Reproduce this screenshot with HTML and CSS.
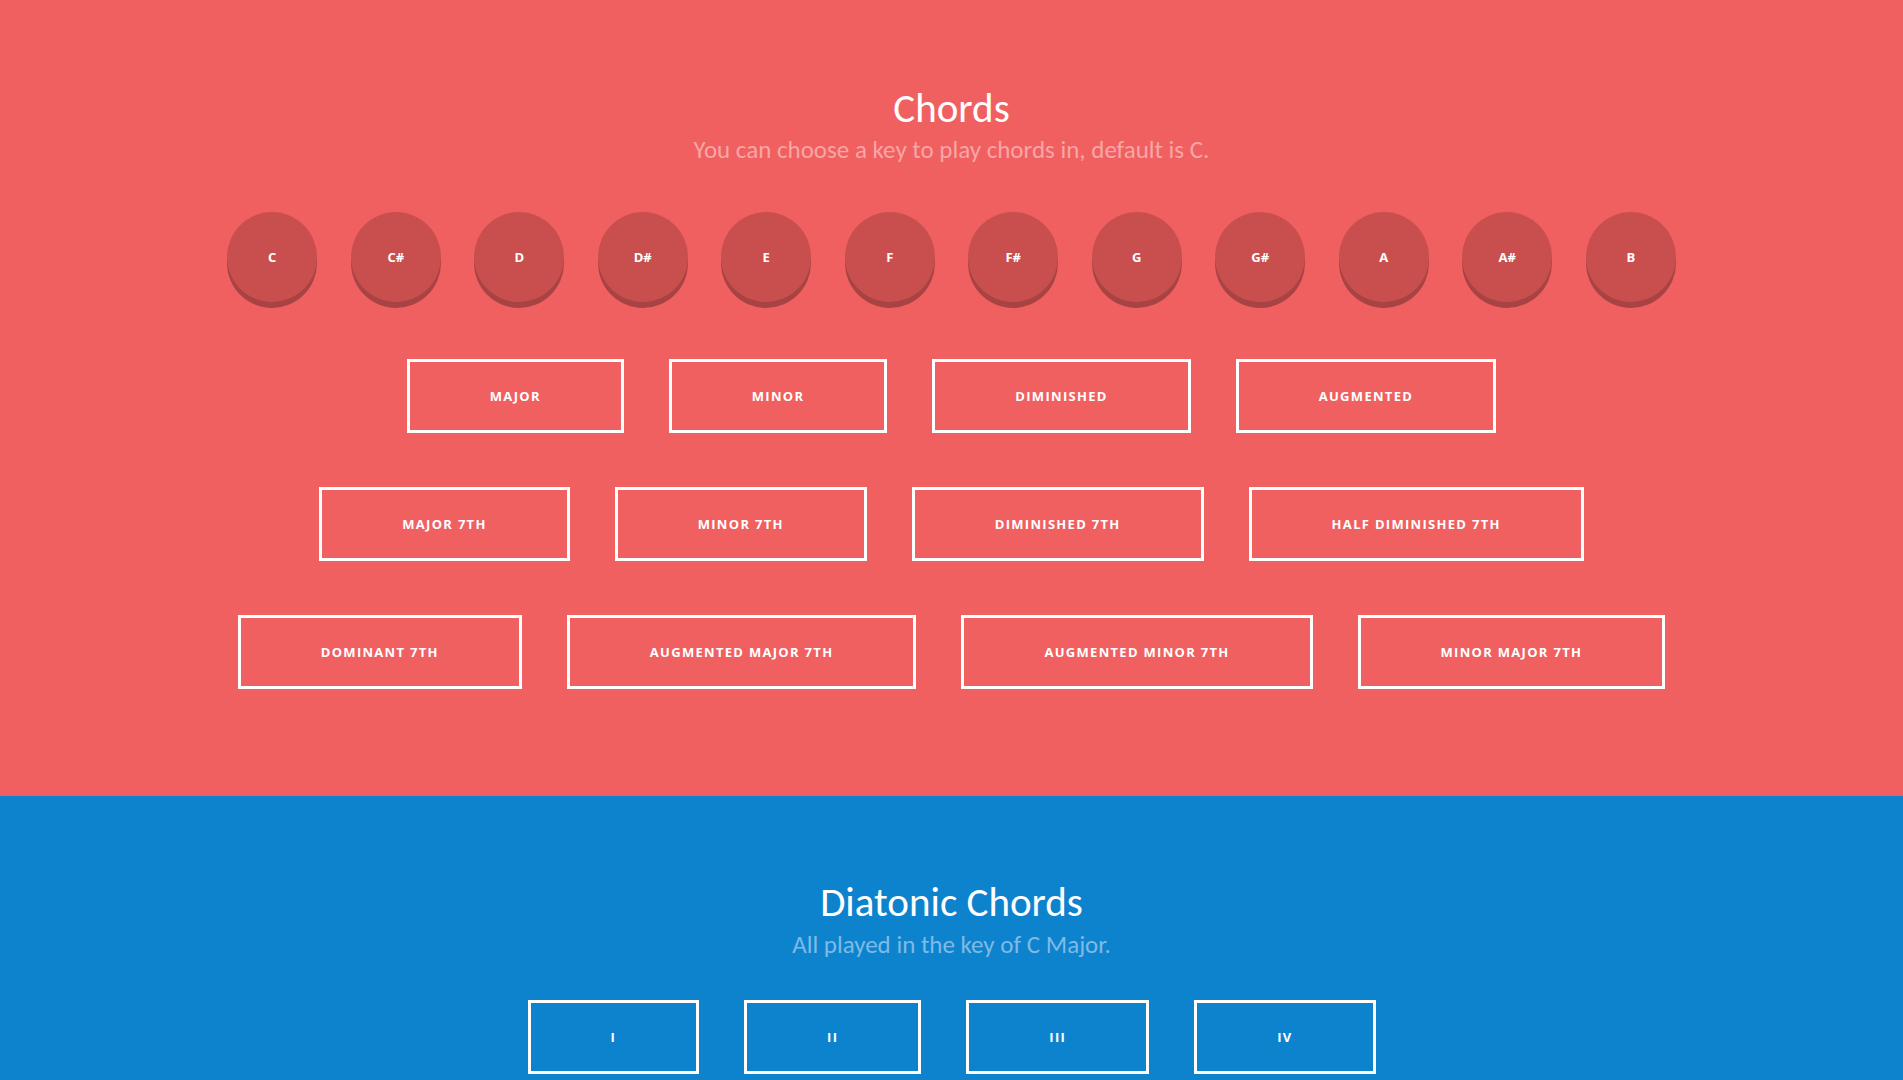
FILE: index.html
```html
<!DOCTYPE html>
<html lang="en">
<head>
<meta charset="utf-8">
<title>Chords</title>
<link rel="stylesheet" href="styles.css">
</head>
<body>
<section class="section section-red">
  <h1 class="title">Chords</h1>
  <p class="subtitle">You can choose a key to play chords in, default is C.</p>
  <div class="keys">
    <button class="key">C</button>
    <button class="key">C#</button>
    <button class="key">D</button>
    <button class="key">D#</button>
    <button class="key">E</button>
    <button class="key">F</button>
    <button class="key">F#</button>
    <button class="key">G</button>
    <button class="key">G#</button>
    <button class="key">A</button>
    <button class="key">A#</button>
    <button class="key">B</button>
  </div>
  <div class="row">
    <button class="btn">Major</button>
    <button class="btn">Minor</button>
    <button class="btn">Diminished</button>
    <button class="btn">Augmented</button>
  </div>
  <div class="row">
    <button class="btn">Major 7th</button>
    <button class="btn">Minor 7th</button>
    <button class="btn">Diminished 7th</button>
    <button class="btn">Half Diminished 7th</button>
  </div>
  <div class="row">
    <button class="btn">Dominant 7th</button>
    <button class="btn">Augmented Major 7th</button>
    <button class="btn">Augmented Minor 7th</button>
    <button class="btn">Minor Major 7th</button>
  </div>
</section>
<section class="section section-blue">
  <h1 class="title">Diatonic Chords</h1>
  <p class="subtitle">All played in the key of C Major.</p>
  <div class="row row-first">
    <button class="btn">I</button>
    <button class="btn">II</button>
    <button class="btn">III</button>
    <button class="btn">IV</button>
  </div>
</section>
</body>
</html>
```
FILE: styles.css
```css
html, body {
  margin: 0;
  padding: 0;
}
body {
  font-family: Carlito, Lato, "Open Sans", sans-serif;
  color: #fff;
  overflow: hidden;
}
.section {
  display: flex;
  flex-direction: column;
  align-items: center;
}
.section-red {
  background: #f06060;
  padding: 84px 0 107px;
}
.section-blue {
  background: #0e83cd;
  padding: 82px 0 60px;
}
.title {
  margin: 0;
  font-size: 41px;
  font-weight: 300;
  line-height: 48px;
}
.subtitle {
  margin: 3px 0 0;
  font-size: 25px;
  font-weight: 300;
  line-height: 30px;
}
.section-red .subtitle {
  color: #f8a6a6;
}
.section-blue .subtitle {
  margin-top: 4px;
  color: #7dbbe6;
}
.keys {
  display: flex;
  gap: 33.5px;
  margin-top: 47px;
}
.key {
  width: 90px;
  height: 90px;
  border: none;
  border-radius: 50%;
  background: #c94f4f;
  box-shadow: 0 6px 0 #a84343;
  color: #fff;
  font-family: "Open Sans", sans-serif;
  font-weight: 700;
  font-size: 13px;
  padding: 0;
}
.row {
  display: flex;
  gap: 45px;
  margin-top: 54px;
}
.keys + .row {
  margin-top: 57px;
}
.row-first {
  margin-top: 40px;
}
.btn {
  height: 74px;
  border: 3px solid #fff;
  background: transparent;
  color: #fff;
  padding: 0 80px;
  font-family: "Open Sans", sans-serif;
  font-weight: 700;
  font-size: 13px;
  letter-spacing: 1.3px;
  text-transform: uppercase;
}
```
